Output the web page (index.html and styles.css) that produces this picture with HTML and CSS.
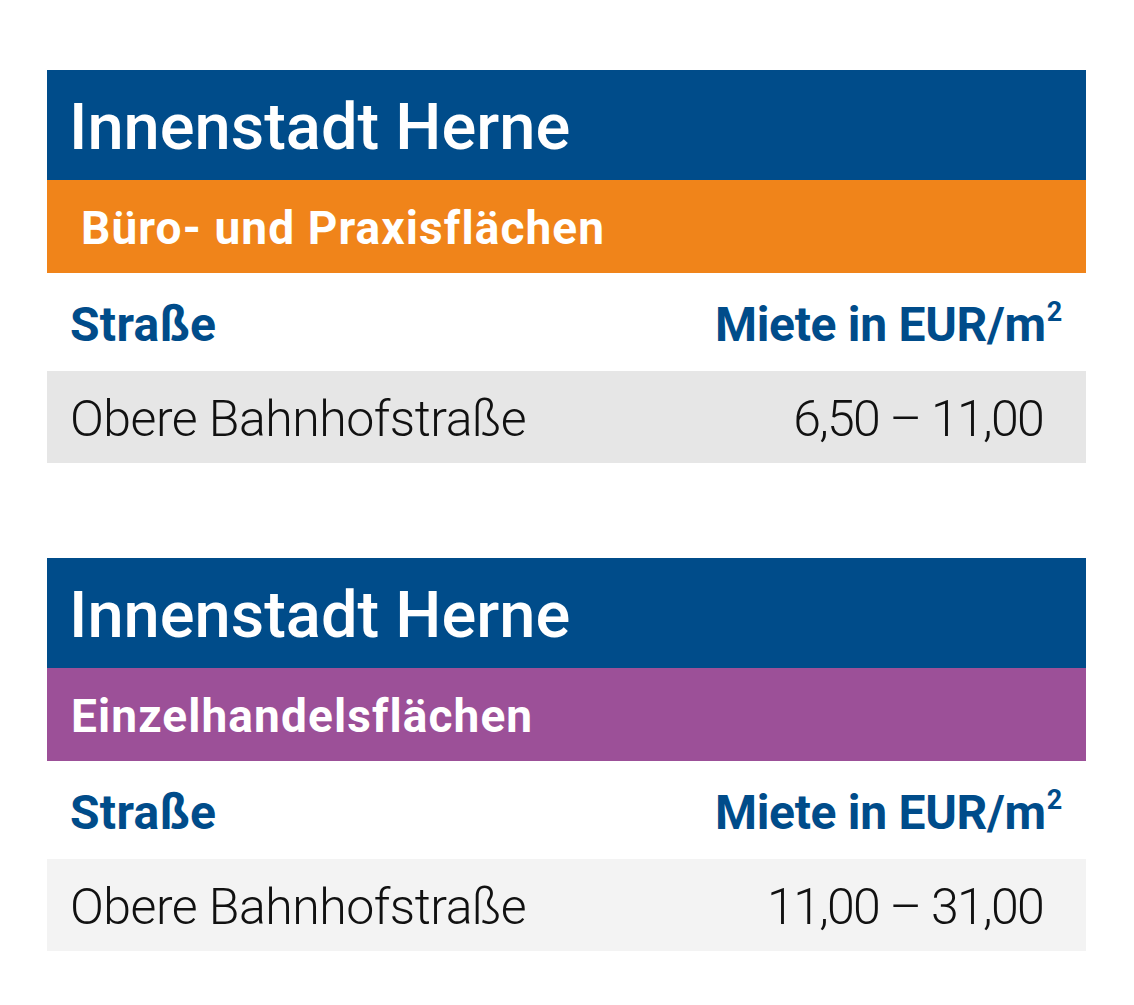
FILE: index.html
```html
<!DOCTYPE html>
<html lang="de">
<head>
<meta charset="utf-8">
<title>Innenstadt Herne</title>
<link rel="stylesheet" href="styles.css">
</head>
<body>
<main class="page">
  <section class="card">
    <div class="title">Innenstadt Herne</div>
    <div class="sub sub-orange"><span class="sub-text indent">Büro- und Praxisflächen</span></div>
    <div class="row head"><span class="col-a">Straße</span><span class="col-b">Miete in EUR/m<sup>2</sup></span></div>
    <div class="row data data-dark"><span class="col-a">Obere Bahnhofstraße</span><span class="col-v">6,50 – 11,00</span></div>
  </section>
  <section class="card">
    <div class="title">Innenstadt Herne</div>
    <div class="sub sub-purple"><span class="sub-text">Einzelhandelsflächen</span></div>
    <div class="row head"><span class="col-a">Straße</span><span class="col-b">Miete in EUR/m<sup>2</sup></span></div>
    <div class="row data data-light"><span class="col-a">Obere Bahnhofstraße</span><span class="col-v">11,00 – 31,00</span></div>
  </section>
</main>
</body>
</html>
```
FILE: styles.css
```css
html, body {
  margin: 0;
  padding: 0;
  background: #ffffff;
}
body {
  font-family: Roboto, "Noto Sans", sans-serif;
}
.page {
  display: flex;
  flex-direction: column;
  gap: 95px;
  padding: 70px 0 0 47px;
  width: 1039px;
}
.card {
  display: flex;
  flex-direction: column;
}
.title {
  height: 110px;
  background: #004c8a;
  color: #ffffff;
  font-size: 65px;
  font-weight: 500;
  letter-spacing: 0;
  display: flex;
  align-items: center;
  padding-left: 22px;
  padding-top: 4px;
  box-sizing: border-box;
}
.sub {
  height: 93px;
  display: flex;
  align-items: center;
  padding-left: 24px;
  padding-top: 2px;
  box-sizing: border-box;
  color: #ffffff;
  font-size: 46px;
  font-weight: 700;
  letter-spacing: 1.1px;
}
.sub-orange { background: #f0841a; }
.sub-purple { background: #9c5098; }
.indent { padding-left: 10px; }
.row {
  display: flex;
  align-items: center;
  justify-content: space-between;
  padding-left: 23px;
  box-sizing: border-box;
}
.head {
  height: 98px;
  color: #004c8a;
  font-size: 48px;
  font-weight: 700;
  padding-right: 24px;
  padding-top: 4px;
}
.head .col-a { letter-spacing: 0.3px; }
.head .col-b { letter-spacing: -0.3px; }
.head sup {
  font-size: 27px;
  vertical-align: 0;
  position: relative;
  top: -20px;
  margin-left: 1px;
}
.data {
  height: 92px;
  color: #111111;
  font-size: 50px;
  font-weight: 300;
  letter-spacing: -0.5px;
  padding-right: 43px;
  padding-top: 4px;
}
.data .col-v { letter-spacing: -1.7px; }
.data-dark { background: #e6e6e6; }
.data-light { background: #f3f3f3; }
```
